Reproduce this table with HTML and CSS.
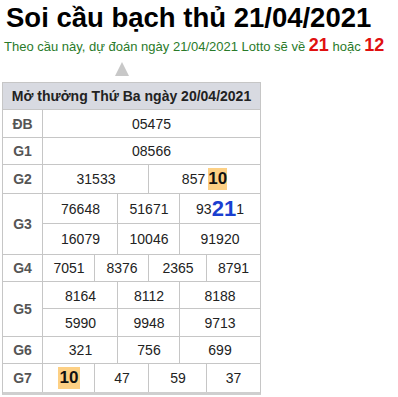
FILE: index.html
```html
<!DOCTYPE html>
<html>
<head>
<meta charset="utf-8">
<link rel="stylesheet" href="styles.css">
</head>
<body>
<h1 class="title">Soi cầu bạch thủ 21/04/2021</h1>
<p class="sub">Theo cầu này, dự đoán ngày 21/04/2021 Lotto sẽ về <b class="red">21</b> hoặc <b class="red">12</b></p>
<div class="arrow-row"><span class="arrow"></span></div>
<div class="tbl">
  <div class="head">Mở thưởng Thứ Ba ngày 20/04/2021</div>
  <div class="row r-db"><div class="lbl">ĐB</div><div class="vals c1"><div class="cell">05475</div></div></div>
  <div class="row"><div class="lbl">G1</div><div class="vals c1"><div class="cell">08566</div></div></div>
  <div class="row r-g2"><div class="lbl">G2</div><div class="vals c2"><div class="cell">31533</div><div class="cell">857<span class="hl gap">10</span></div></div></div>
  <div class="row r-g3"><div class="lbl">G3</div><div class="vals c3">
    <div class="cell">76648</div><div class="cell">51671</div><div class="cell">93<span class="blue">21</span>1</div>
    <div class="cell">16079</div><div class="cell">10046</div><div class="cell">91920</div>
  </div></div>
  <div class="row"><div class="lbl">G4</div><div class="vals c4"><div class="cell">7051</div><div class="cell">8376</div><div class="cell">2365</div><div class="cell">8791</div></div></div>
  <div class="row r-g5"><div class="lbl">G5</div><div class="vals c3">
    <div class="cell">8164</div><div class="cell">8112</div><div class="cell">8188</div>
    <div class="cell">5990</div><div class="cell">9948</div><div class="cell">9713</div>
  </div></div>
  <div class="row"><div class="lbl">G6</div><div class="vals c3"><div class="cell">321</div><div class="cell">756</div><div class="cell">699</div></div></div>
  <div class="row r-g7"><div class="lbl">G7</div><div class="vals c4"><div class="cell"><span class="hl wide">10</span></div><div class="cell">47</div><div class="cell">59</div><div class="cell">37</div></div></div>
</div>
</body>
</html>
```
FILE: styles.css
```css
* { box-sizing: border-box; }
body {
  margin: 0;
  background: #fff;
  font-family: "Liberation Sans", Arial, sans-serif;
  color: #222;
}
.title {
  margin: 0;
  padding: 2px 0 0 6px;
  font-size: 27.5px;
  line-height: 31px;
  font-weight: bold;
  color: #000;
}
.sub {
  margin: 3px 0 0 4px;
  font-size: 13px;
  line-height: 18px;
  color: #2a7a2a;
}
.red {
  color: #e01010;
  font-size: 18px;
}
.arrow-row {
  display: flex;
  height: 26px;
  padding: 6px 0 0 115px;
}
.arrow {
  width: 0;
  height: 0;
  border-left: 7px solid transparent;
  border-right: 7px solid transparent;
  border-bottom: 14px solid #c8c8c8;
}
.tbl {
  width: 259px;
  margin-left: 2px;
  border: 1px solid #c6c6c6;
  border-bottom: 3px solid #cfcfcf;
  font-size: 14px;
}
.head {
  height: 27px;
  background: #d8dae1;
  font-weight: bold;
  font-size: 14px;
  color: #222;
  display: flex;
  align-items: center;
  justify-content: center;
  border-bottom: 1px solid #c6c6c6;
}
.row {
  display: flex;
  border-bottom: 1px solid #c6c6c6;
}
.row:last-child { border-bottom: none; }
.lbl {
  width: 40px;
  flex: none;
  font-weight: bold;
  color: #555;
  display: flex;
  align-items: center;
  justify-content: center;
  border-right: 1px solid #c6c6c6;
}
.vals {
  flex: 1;
  display: grid;
}
.cell {
  height: 27px;
  display: flex;
  align-items: center;
  justify-content: center;
  border-left: 1px solid #c6c6c6;
  border-top: 1px solid #c6c6c6;
  margin-left: -1px;
  margin-top: -1px;
}
.c1 { grid-template-columns: 1fr; }
.c2 { grid-template-columns: 106px 1fr; }
.c3 { grid-template-columns: 75px 62px 1fr; }
.c4 { grid-template-columns: 52px 54px 58px 1fr; }
.r-db .cell { height: 28px; }
.r-g2 .cell { height: 29px; }
.r-g3 .cell { height: 31px; }
.r-g5 .cell { height: 28px; }
.r-g7 .cell { height: 29px; }
.hl {
  background: #fdd084;
  font-weight: bold;
  font-size: 17px;
  line-height: 18px;
  padding: 2px 0;
  color: #111;
}
.gap { margin-left: 3px; }
.wide { padding: 2px 2px; }
.blue {
  color: #1a3fd0;
  font-weight: bold;
  font-size: 22px;
}
```
